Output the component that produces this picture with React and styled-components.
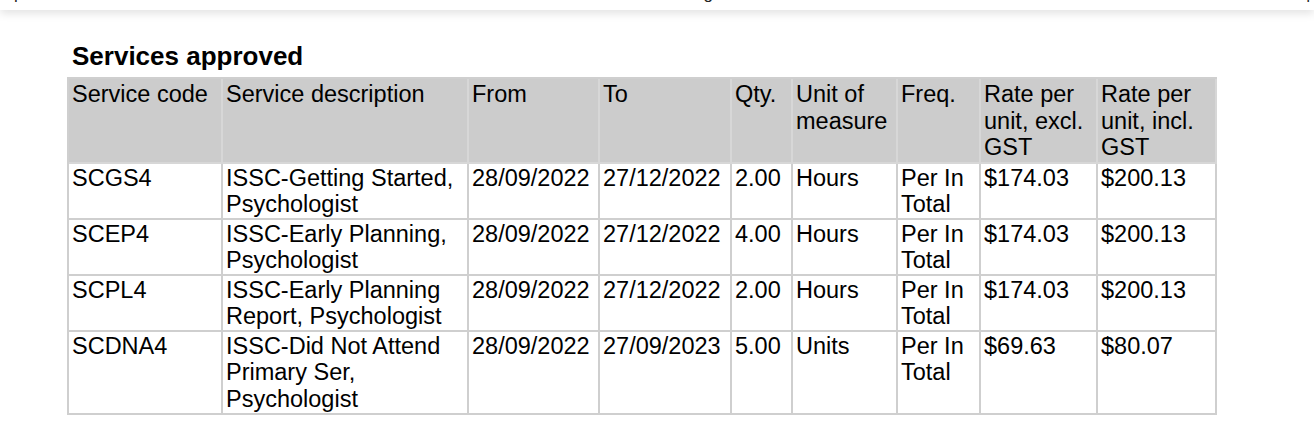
import styled, { createGlobalStyle } from 'styled-components';

const GlobalStyle = createGlobalStyle`
  html, body {
    margin: 0;
    padding: 0;
    background: #fff;
  }
  body {
    font-family: "Liberation Sans", Arial, sans-serif;
    color: #000;
  }
`;

// thin header strip, only the tails of its text are visible
const TopBar = styled.div`
  height: 10px;
  overflow: hidden;
  background: #fff;
  box-shadow: 0 3px 10px rgba(0, 0, 0, 0.13);
  position: relative;
  z-index: 1;
`;

const TopLine = styled.div`
  display: flex;
  margin-top: -16px;
  font-size: 17px;
  line-height: 20px;
  color: #222;
`;

const Tail = styled.span`
  margin-left: ${props => props.$at}px;
`;

const Page = styled.div`
  padding: 31px 0 0 67px;
`;

const Title = styled.h2`
  margin: 0 0 6px;
  padding-left: 5px;
  font-size: 26px;
  line-height: 30px;
  font-weight: bold;
`;

const Table = styled.table`
  table-layout: fixed;
  width: 1150px;
  border-collapse: separate;
  border-spacing: 0;
  border-top: 2px solid #cfcfcf;
  border-left: 2px solid #cfcfcf;
  font-size: 23.5px;
  line-height: 26.5px;

  th, td {
    box-sizing: border-box;
    padding: 0 3px;
    vertical-align: top;
    text-align: left;
    font-weight: normal;
    border-right: 2px solid #cfcfcf;
    border-bottom: 2px solid #cfcfcf;
  }

  td {
    padding-top: 1px;
  }

  tr:last-child td {
    padding-bottom: 1px;
  }
`;

const HeadCell = styled.th`
  background: #cccccc;
  padding: 2px 3px 1px !important;
  border-right-color: #d7d7d7 !important;
  border-bottom-color: #d7d7d7 !important;
`;

const columns = [
  { label: 'Service code', width: 154 },
  { label: 'Service description', width: 246 },
  { label: 'From', width: 131 },
  { label: 'To', width: 132 },
  { label: 'Qty.', width: 61 },
  { label: 'Unit of measure', width: 105 },
  { label: 'Freq.', width: 83 },
  { label: 'Rate per unit, excl. GST', width: 117 },
  { label: 'Rate per unit, incl. GST', width: 119 },
];

const rows = [
  ['SCGS4', 'ISSC-Getting Started, Psychologist', '28/09/2022', '27/12/2022', '2.00', 'Hours', 'Per In Total', '$174.03', '$200.13'],
  ['SCEP4', 'ISSC-Early Planning, Psychologist', '28/09/2022', '27/12/2022', '4.00', 'Hours', 'Per In Total', '$174.03', '$200.13'],
  ['SCPL4', 'ISSC-Early Planning Report, Psychologist', '28/09/2022', '27/12/2022', '2.00', 'Hours', 'Per In Total', '$174.03', '$200.13'],
  ['SCDNA4', 'ISSC-Did Not Attend Primary Ser, Psychologist', '28/09/2022', '27/09/2023', '5.00', 'Units', 'Per In Total', '$69.63', '$80.07'],
];

export default function App() {
  return (
    <>
      <GlobalStyle />
      <TopBar>
        <TopLine>
          <Tail $at={14}>p</Tail>
          <Tail $at={680}>g</Tail>
          <Tail $at={593}>|</Tail>
        </TopLine>
      </TopBar>
      <Page>
        <Title>Services approved</Title>
        <Table>
          <colgroup>
            {columns.map((c, i) => (
              <col key={i} style={{ width: c.width }} />
            ))}
          </colgroup>
          <thead>
            <tr>
              {columns.map((c, i) => (
                <HeadCell key={i}>{c.label}</HeadCell>
              ))}
            </tr>
          </thead>
          <tbody>
            {rows.map((r, i) => (
              <tr key={i}>
                {r.map((v, j) => (
                  <td key={j}>{v}</td>
                ))}
              </tr>
            ))}
          </tbody>
        </Table>
      </Page>
    </>
  );
}
